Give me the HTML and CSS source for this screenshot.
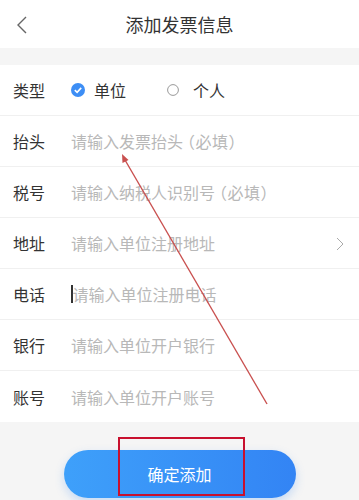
FILE: index.html
```html
<!DOCTYPE html>
<html lang="zh">
<head>
<meta charset="utf-8">
<link rel="stylesheet" href="styles.css">
</head>
<body>
<div class="page">
  <header class="nav">
    <svg class="back" width="12" height="20" viewBox="0 0 12 20"><path d="M10 2 L2 10 L10 18" fill="none" stroke="#666" stroke-width="1.4"/></svg>
    <div class="title">添加发票信息</div>
  </header>
  <div class="gap"></div>
  <div class="form">
    <div class="row">
      <span class="label">类型</span>
      <div class="radios">
        <span class="radio on"><svg width="14" height="14" viewBox="0 0 14 14"><circle cx="7" cy="7" r="7" fill="#3d8ef5"/><path d="M3.8 7.1 L6.1 9.3 L10.2 4.9" fill="none" stroke="#fff" stroke-width="1.6"/></svg>单位</span>
        <span class="radio off"><svg width="12" height="12" viewBox="0 0 12 12"><circle cx="6" cy="6" r="5.4" fill="none" stroke="#999" stroke-width="1"/></svg>个人</span>
      </div>
    </div>
    <div class="row"><span class="label">抬头</span><span class="ph">请输入发票抬头<span class="paren">（必填）</span></span></div>
    <div class="row"><span class="label">税号</span><span class="ph">请输入纳税人识别号<span class="paren">（必填）</span></span></div>
    <div class="row"><span class="label">地址</span><span class="ph">请输入单位注册地址</span>
      <svg class="chev" width="8" height="14" viewBox="0 0 8 14"><path d="M1 1 L7 7 L1 13" fill="none" stroke="#aaa" stroke-width="1"/></svg></div>
    <div class="row"><span class="label">电话</span><span class="ph"><i class="caret"></i>请输入单位注册电话</span></div>
    <div class="row"><span class="label">银行</span><span class="ph">请输入单位开户银行</span></div>
    <div class="row last"><span class="label">账号</span><span class="ph">请输入单位开户账号</span></div>
  </div>
  <div class="footer">
    <button class="submit">确定添加</button>
  </div>
  <div class="redbox"></div>
  <svg class="arrow" width="359" height="500" viewBox="0 0 359 500">
    <line x1="267" y1="404" x2="125" y2="160" stroke="#c9504f" stroke-width="1.4"/>
    <path d="M122 154 L128.5 160 L122.5 163 Z" fill="#c9504f"/>
  </svg>
</div>
</body>
</html>
```
FILE: styles.css
```css
* { box-sizing: border-box; }
html, body { margin: 0; padding: 0; }
body { font-family: "Noto Sans CJK SC", "Noto Sans", sans-serif; background: #f5f5f5; }
.page { position: relative; width: 359px; height: 500px; overflow: hidden; background: #f5f5f5; }
.nav { height: 48px; background: #fff; display: flex; align-items: center; justify-content: center; position: relative; }
.back { position: absolute; left: 16px; top: 15px; }
.title { font-size: 18px; color: #333; }
.gap { height: 17px; }
.form { background: #fff; }
.row { height: 51px; display: flex; align-items: center; padding: 0 13px; border-bottom: 1px solid #f0f0f0; position: relative; }
.row.last { border-bottom: none; }
.label { width: 58px; font-size: 16px; color: #333; }
.ph { font-size: 16px; color: #b8b8b8; display: flex; align-items: center; }
.paren { font-feature-settings: "halt"; margin-left: 4px; letter-spacing: 0.5px; }
.caret { display: inline-block; width: 1.5px; height: 18px; background: #333; }
.radios { display: flex; align-items: center; }
.radio { display: flex; align-items: center; font-size: 16px; color: #333; }
.radio.on svg { margin-right: 9px; }
.radio.off svg { margin-right: 14px; }
.radio.on { margin-right: 41px; }
.chev { position: absolute; right: 15px; top: 19px; }
.footer { padding-top: 28px; display: flex; justify-content: center; }
.submit { width: 232px; height: 48px; border: none; border-radius: 24px; background: linear-gradient(90deg, #3ea0fa, #3384f4); color: #fff; font-family: inherit; font-size: 16px; box-shadow: 0 4px 10px rgba(60,140,245,0.25); }
.redbox { position: absolute; left: 118px; top: 437px; width: 127px; height: 59px; border: 2px solid #c8102e; }
.arrow { position: absolute; left: 0; top: 0; pointer-events: none; }
```
